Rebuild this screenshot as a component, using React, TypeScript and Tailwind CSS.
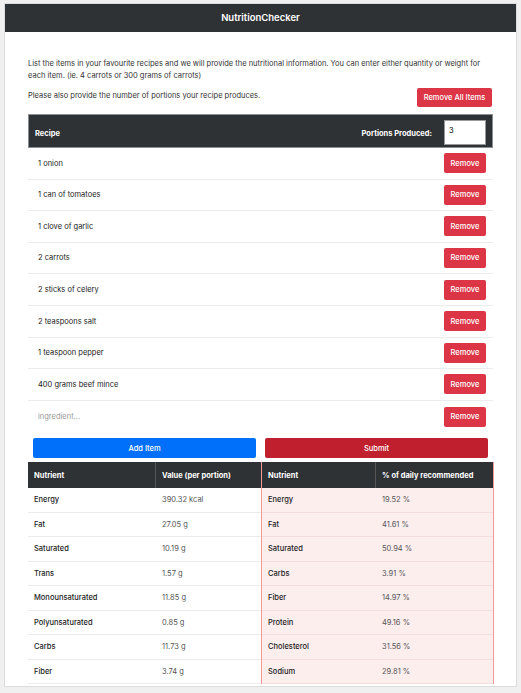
import React from "react";

const items = [
  "1 onion",
  "1 can of tomatoes",
  "1 clove of garlic",
  "2 carrots",
  "2 sticks of celery",
  "2 teaspoons salt",
  "1 teaspoon pepper",
  "400 grams beef mince",
];

const left = [
  ["Energy", "390.32 kcal"],
  ["Fat", "27.05 g"],
  ["Saturated", "10.19 g"],
  ["Trans", "1.57 g"],
  ["Monounsaturated", "11.85 g"],
  ["Polyunsaturated", "0.85 g"],
  ["Carbs", "11.73 g"],
  ["Fiber", "3.74 g"],
];
const right = [
  ["Energy", "19.52 %"],
  ["Fat", "41.61 %"],
  ["Saturated", "50.94 %"],
  ["Carbs", "3.91 %"],
  ["Fiber", "14.97 %"],
  ["Protein", "49.16 %"],
  ["Cholesterol", "31.56 %"],
  ["Sodium", "29.81 %"],
];

function RemoveBtn() {
  return (
    <button className="h-[20px] w-[42px] rounded-[2px] bg-[#dc3545] text-white text-[7.5px] font-medium">
      Remove
    </button>
  );
}

export default function App() {
  return (
    <div
      className="min-h-[693px] w-[521px] bg-[#f0f0f0] pt-[3px] px-[4px]"
      style={{ fontFamily: "Inter, 'Liberation Sans', sans-serif" }}
    >
      <div className="h-[684px] overflow-hidden border border-[#dcdcdc] bg-white">
        <div className="flex h-[28px] items-center justify-center bg-[#2f3235] text-[9.5px] font-semibold text-white">
          NutritionChecker
        </div>
        <div className="px-[23px] pt-[26px]">
          <p className="text-[7.5px] leading-[12px] text-[#333]">
            List the items in your favourite recipes and we will provide the nutritional information. You can enter either quantity or weight for each item. (ie. 4 carrots or 300 grams of carrots)
          </p>
          <div className="mt-[8px] flex items-start justify-between">
            <p className="text-[7.5px] leading-[12px] text-[#333]">
              Please also provide the number of portions your recipe produces.
            </p>
            <button className="mr-[1px] mt-[-2px] h-[19px] w-[75px] rounded-[2px] bg-[#dc3545] text-[7.5px] font-medium text-white">
              Remove All Items
            </button>
          </div>
          <div className="mt-[7px] flex h-[34px] items-end justify-between border border-[#8a8f94] bg-[#2f3235] pb-[8px] pl-[6px] pr-[6px] text-[7.5px] font-bold text-white">
            <span>Recipe</span>
            <div className="flex items-end gap-[12px]">
              <span>Portions Produced:</span>
              <div className="mb-[-6px] flex h-[25px] w-[42px] items-start border border-[#999] bg-white pl-[4px] pt-[4px] text-[7.5px] font-normal text-black">
                3
              </div>
            </div>
          </div>
          {items.map((t) => (
            <div
              key={t}
              className="flex h-[31.6px] items-center justify-between border-b border-[#ececec] pl-[10px] pr-[7px] text-[7.5px] text-[#222]"
            >
              <span>{t}</span>
              <RemoveBtn />
            </div>
          ))}
          <div className="flex h-[31.6px] items-center justify-between pl-[10px] pr-[7px] text-[7.5px] text-[#999]">
            <span>ingredient...</span>
            <RemoveBtn />
          </div>
          <div className="mt-[6px] flex gap-[9px] px-[5px]">
            <button className="h-[20px] flex-1 rounded-[2px] bg-[#006ff9] text-[7.5px] font-medium text-white">
              Add Item
            </button>
            <button className="h-[20px] flex-1 rounded-[2px] bg-[#c01f2d] text-[7.5px] font-medium text-white">
              Submit
            </button>
          </div>
          <div className="mt-[4px] grid grid-cols-[233px_233px] text-[7.5px]">
            <div>
              <div className="grid h-[26px] grid-cols-[128px_105px] items-center bg-[#2f3235] font-bold text-white">
                <div className="flex h-full items-center border-r border-[#555] pl-[6px]">Nutrient</div>
                <div className="pl-[6px]">Value (per portion)</div>
              </div>
              {left.map(([a, b]) => (
                <div key={a} className="grid h-[24.5px] grid-cols-[128px_105px] items-center border-b border-[#ececec]">
                  <div className="pl-[6px] font-medium text-[#222]">{a}</div>
                  <div className="pl-[6px] text-[#555]">{b}</div>
                </div>
              ))}
            </div>
            <div className="border-x border-[#f29a9a] bg-[#fdeeee]">
              <div className="grid h-[26px] grid-cols-[114px_119px] items-center bg-[#2f3235] font-bold text-white">
                <div className="flex h-full items-center border-r border-[#555] pl-[6px]">Nutrient</div>
                <div className="pl-[6px]">% of daily recommended</div>
              </div>
              {right.map(([a, b]) => (
                <div key={a} className="grid h-[24.5px] grid-cols-[114px_119px] items-center border-b border-[#f3dede]">
                  <div className="pl-[6px] font-medium text-[#222]">{a}</div>
                  <div className="pl-[6px] text-[#555]">{b}</div>
                </div>
              ))}
            </div>
          </div>
        </div>
      </div>
    </div>
  );
}
